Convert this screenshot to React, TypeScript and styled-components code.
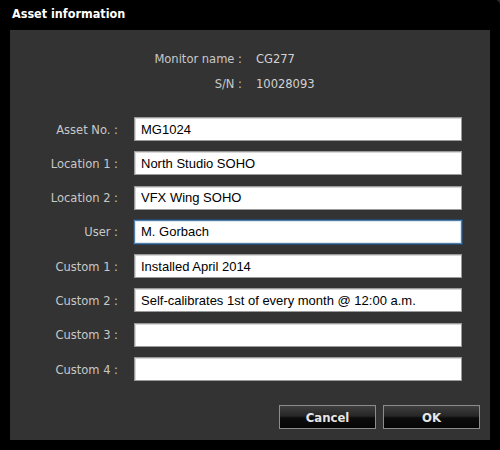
import { FC, Fragment } from 'react';
import styled, { createGlobalStyle } from 'styled-components';

const GlobalStyle = createGlobalStyle`
  html, body {
    margin: 0;
    padding: 0;
    background: #2a2a2a;
  }
  body {
    font-family: 'DejaVu Sans', Verdana, sans-serif;
  }
`;

const Window = styled.div`
  width: 500px;
  height: 450px;
  box-sizing: border-box;
  background: #000;
  border-top-right-radius: 5px;
  padding: 0 10px 10px;
  display: flex;
  flex-direction: column;
`;

const TitleBar = styled.div`
  height: 30px;
  display: flex;
  align-items: center;
  padding-left: 2px;
  padding-bottom: 4px;
  box-sizing: border-box;
  color: #fff;
  font-weight: bold;
  font-size: 12.5px;
  font-family: 'DejaVu Sans Condensed', 'DejaVu Sans', sans-serif;
`;

const Panel = styled.div`
  flex: 1;
  background: #333333;
  display: flex;
  flex-direction: column;
  padding: 16px 28px 11px 0;
`;

const InfoGrid = styled.div`
  display: grid;
  grid-template-columns: 232px 1fr;
  column-gap: 14px;
  grid-auto-rows: 25px;
  align-items: center;
  margin-bottom: 21px;
`;

const InfoLabel = styled.div`
  text-align: right;
  color: #c8c8c8;
  font-size: 12.8px;
  font-family: 'DejaVu Sans Condensed', 'DejaVu Sans', sans-serif;
`;

const InfoValue = styled.div`
  color: #d2d2d2;
  font-size: 12.8px;
  font-family: 'DejaVu Sans Condensed', 'DejaVu Sans', sans-serif;
`;

const FormGrid = styled.div`
  display: grid;
  grid-template-columns: 108px 1fr;
  column-gap: 16px;
  row-gap: 10.3px;
  grid-auto-rows: 24px;
  align-items: center;
`;

const FieldLabel = styled.label`
  text-align: right;
  color: #c8c8c8;
  font-size: 12.8px;
  font-family: 'DejaVu Sans Condensed', 'DejaVu Sans', sans-serif;
`;

const TextInput = styled.input<{ $focused?: boolean }>`
  height: 24px;
  box-sizing: border-box;
  margin: 0;
  padding: 0 6px;
  background: #fff;
  color: #000;
  font-size: 13px;
  font-family: 'Liberation Sans', Arial, sans-serif;
  border: 1px solid ${({ $focused }) => ($focused ? '#4d7eae' : '#9a9a9a')};
  box-shadow: ${({ $focused }) =>
    $focused ? '0 0 0 1px #274766, inset 0 0 0 1px #dfe8f2' : 'inset 1px 1px 0 #d8d8d8'};
  outline: none;
`;

const ButtonRow = styled.div`
  margin-top: auto;
  display: flex;
  justify-content: flex-end;
  gap: 7px;
  margin-right: -18px;
`;

const Button = styled.button`
  width: 97px;
  height: 24px;
  box-sizing: border-box;
  border: 1px solid #8c8c8c;
  background: linear-gradient(to bottom, #3f3f3f 0%, #262626 45%, #0c0c0c 55%, #050505 100%);
  color: #e6e6e6;
  font-weight: bold;
  font-size: 13px;
  font-family: 'DejaVu Sans Condensed', 'DejaVu Sans', sans-serif;
  padding: 0;
  cursor: pointer;
`;

const fields = [
  { label: 'Asset No. :', value: 'MG1024' },
  { label: 'Location 1 :', value: 'North Studio SOHO' },
  { label: 'Location 2 :', value: 'VFX Wing SOHO' },
  { label: 'User :', value: 'M. Gorbach', focused: true },
  { label: 'Custom 1 :', value: 'Installed April 2014' },
  { label: 'Custom 2 :', value: 'Self-calibrates 1st of every month @ 12:00 a.m.' },
  { label: 'Custom 3 :', value: '' },
  { label: 'Custom 4 :', value: '' },
];

const App: FC = () => {
  return (
    <>
      <GlobalStyle />
      <Window>
        <TitleBar>Asset information</TitleBar>
        <Panel>
          <InfoGrid>
            <InfoLabel>Monitor name :</InfoLabel>
            <InfoValue>CG277</InfoValue>
            <InfoLabel>S/N :</InfoLabel>
            <InfoValue>10028093</InfoValue>
          </InfoGrid>
          <FormGrid>
            {fields.map((f) => (
              <Fragment key={f.label}>
                <FieldLabel>{f.label}</FieldLabel>
                <TextInput defaultValue={f.value} $focused={f.focused} />
              </Fragment>
            ))}
          </FormGrid>
          <ButtonRow>
            <Button>Cancel</Button>
            <Button>OK</Button>
          </ButtonRow>
        </Panel>
      </Window>
    </>
  );
};

export default App;
